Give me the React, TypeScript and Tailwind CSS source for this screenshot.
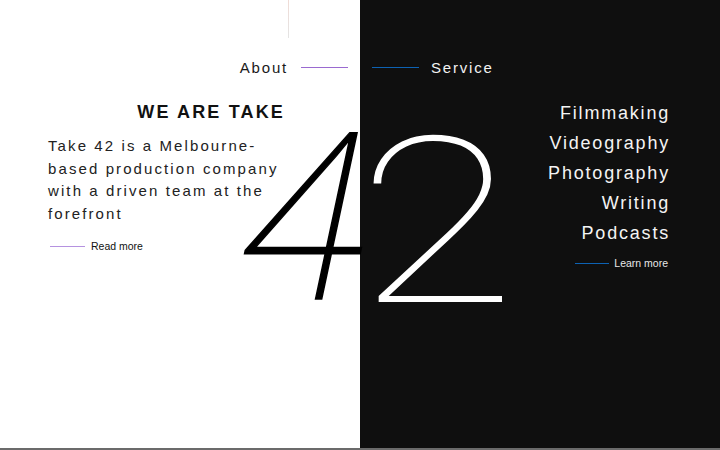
import React from 'react';

// Take 42 landing split: white "About" half, black "Service" half, big 42 across the seam

const services = ['Filmmaking', 'Videography', 'Photography', 'Writing', 'Podcasts'];

export default function App() {
  return (
    <div
      className="relative w-[720px] h-[450px] overflow-hidden grid grid-cols-2 border-b-2 border-[#6b6b6b]"
      style={{ fontFamily: '"Liberation Sans", Arial, sans-serif' }}
    >
      {/* About half */}
      <div className="relative bg-white flex flex-col">
        <div className="absolute left-[288px] top-0 w-px h-[38px] bg-gradient-to-b from-[#f0dcd6] to-[#e4e4e4]" />
        <div className="mt-[56px] h-[23px] flex items-center justify-end gap-[13px] pr-[12px]">
          <span className="text-[15px] leading-[23px] tracking-[0.12em] text-[#1a1a1a]">About</span>
          <span className="block w-[47px] h-px bg-[#9a6ad0]" />
        </div>
        <h2 className="mt-[20px] pr-[75px] text-right text-[18px] font-bold tracking-[0.12em] text-[#111]">
          WE ARE TAKE
        </h2>
        <p className="mt-[9px] pl-[48px] text-[15px] leading-[22.5px] tracking-[0.14em] text-[#222]">
          Take 42 is a Melbourne-
          <br />
          based production company
          <br />
          with a driven team at the
          <br />
          forefront
        </p>
        <div className="mt-[14px] h-[15px] pl-[50px] flex items-center gap-[6px]">
          <span className="block w-[35px] h-px bg-[#b592e0]" />
          <span className="text-[10.5px] leading-[15px] text-[#111]">Read more</span>
        </div>
      </div>

      {/* Service half */}
      <div className="bg-[#0f0f0f] flex flex-col">
        <div className="mt-[56px] h-[23px] flex items-center gap-[12px] pl-[12px]">
          <span className="block w-[47px] h-px bg-[#0d62b3]" />
          <span className="text-[15px] leading-[23px] tracking-[0.12em] text-[#f2f2f2]">Service</span>
        </div>
        <ul className="mt-[19px] pr-[50px] flex flex-col items-end">
          {services.map((s) => (
            <li key={s} className="text-[18px] leading-[30px] tracking-[0.1em] text-[#f4f4f4]">
              {s}
            </li>
          ))}
        </ul>
        <div className="mt-[8px] h-[15px] pr-[52px] flex items-center justify-end gap-[5px]">
          <span className="block w-[34px] h-px bg-[#0d62b3]" />
          <span className="text-[10.5px] leading-[15px] text-[#e8e8e8]">Learn more</span>
        </div>
      </div>

      {/* big 42 straddling the seam */}
      <span
        className="absolute left-[244px] top-[102px] text-[234px] leading-[234px] h-[220px] font-thin text-black [-webkit-text-stroke:1.5px_black] -skew-x-12 pointer-events-none select-none"
        style={{ fontFamily: 'Roboto, "Liberation Sans", sans-serif' }}
      >
        4
      </span>
      <span
        className="absolute left-[357px] top-[107px] text-[232px] leading-[232px] h-[220px] font-thin text-white origin-left scale-x-[1.25] pointer-events-none select-none"
        style={{ fontFamily: 'Roboto, "Liberation Sans", sans-serif' }}
      >
        2
      </span>
    </div>
  );
}
